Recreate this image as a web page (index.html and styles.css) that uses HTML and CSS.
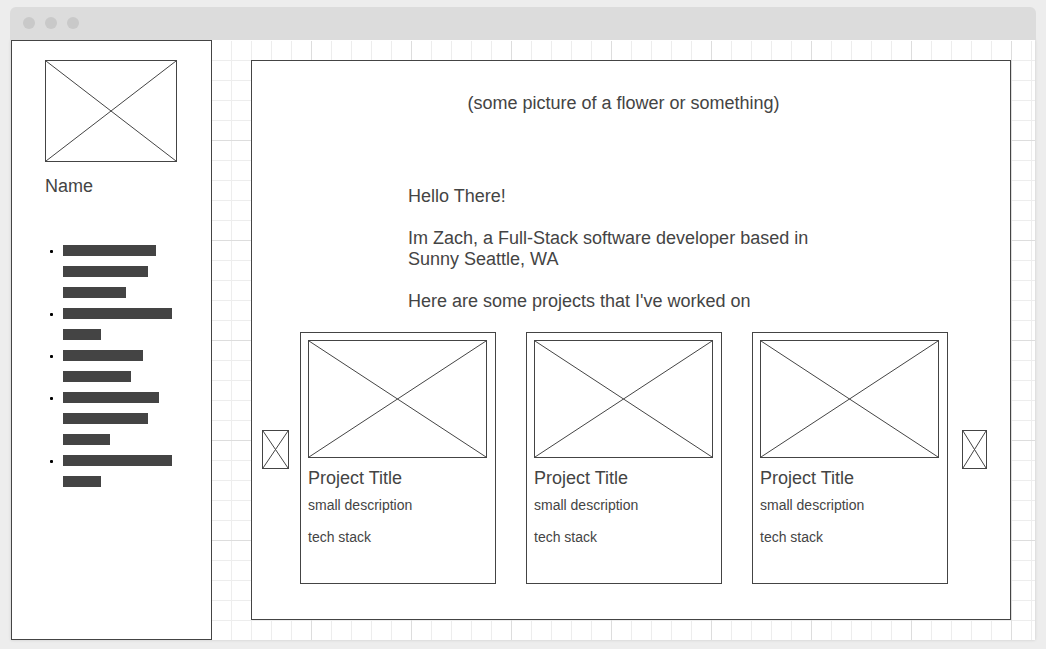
FILE: index.html
```html
<!DOCTYPE html>
<html lang="en">
<head>
<meta charset="utf-8">
<meta name="viewport" content="width=device-width, initial-scale=1">
<title>Portfolio wireframe</title>
<link rel="stylesheet" href="styles.css">
</head>
<body>
<div class="window">
  <header class="titlebar">
    <span class="dot"></span><span class="dot"></span><span class="dot"></span>
  </header>
  <div class="canvas">
    <aside class="sidebar">
      <svg class="placeholder portrait" viewBox="0 0 100 100" preserveAspectRatio="none" aria-hidden="true"><path d="M0 0L100 100M100 0L0 100"/></svg>
      <p class="name">Name</p>
      <ul class="links">
        <li><span class="bar" style="width:93px"></span><span class="bar" style="width:85px"></span><span class="bar" style="width:63px"></span></li>
        <li><span class="bar" style="width:109px"></span><span class="bar" style="width:38px"></span></li>
        <li><span class="bar" style="width:80px"></span><span class="bar" style="width:68px"></span></li>
        <li><span class="bar" style="width:96px"></span><span class="bar" style="width:85px"></span><span class="bar" style="width:47px"></span></li>
        <li><span class="bar" style="width:109px"></span><span class="bar" style="width:38px"></span></li>
      </ul>
    </aside>
    <main class="page">
      <p class="banner">(some picture of a flower or something)</p>
      <div class="intro">
        <p>Hello There!</p>
        <p>Im Zach, a Full-Stack software developer based in<br>Sunny Seattle, WA</p>
        <p>Here are some projects that I've worked on</p>
      </div>
      <section class="carousel" aria-label="Projects">
        <button class="arrow previous" type="button" aria-label="Previous">
          <svg class="placeholder" viewBox="0 0 100 100" preserveAspectRatio="none" aria-hidden="true"><path d="M0 0L100 100M100 0L0 100"/></svg>
        </button>
        <div class="cards">
          <article class="card">
            <svg class="placeholder thumb" viewBox="0 0 100 100" preserveAspectRatio="none" aria-hidden="true"><path d="M0 0L100 100M100 0L0 100"/></svg>
            <h2>Project Title</h2>
            <p>small description</p>
            <p>tech stack</p>
          </article>
          <article class="card">
            <svg class="placeholder thumb" viewBox="0 0 100 100" preserveAspectRatio="none" aria-hidden="true"><path d="M0 0L100 100M100 0L0 100"/></svg>
            <h2>Project Title</h2>
            <p>small description</p>
            <p>tech stack</p>
          </article>
          <article class="card">
            <svg class="placeholder thumb" viewBox="0 0 100 100" preserveAspectRatio="none" aria-hidden="true"><path d="M0 0L100 100M100 0L0 100"/></svg>
            <h2>Project Title</h2>
            <p>small description</p>
            <p>tech stack</p>
          </article>
        </div>
        <button class="arrow next" type="button" aria-label="Next">
          <svg class="placeholder" viewBox="0 0 100 100" preserveAspectRatio="none" aria-hidden="true"><path d="M0 0L100 100M100 0L0 100"/></svg>
        </button>
      </section>
    </main>
  </div>
</div>
</body>
</html>
```
FILE: styles.css
```css
* {
  box-sizing: border-box;
}

body {
  margin: 0;
  padding: 7px 10px 8px;
  background: #ededed;
  color: #444;
  font: 18px/21px "Liberation Sans", Arial, sans-serif;
}

p,
h2,
ul {
  margin: 0;
  padding: 0;
}

/* Stacked above the canvas so that the canvas shadow stays hidden behind it. */
.titlebar {
  position: relative;
  display: flex;
  align-items: center;
  gap: 10px;
  height: 33px;
  padding: 0 13px 1px;
  border-radius: 6px 6px 0 0;
  background: #dcdcdc;
}

.dot {
  width: 12px;
  height: 12px;
  border-radius: 50%;
  background: #c9c9c9;
}

/* Grid paper: a line every 20px, a darker one every 100px. */
.canvas {
  display: flex;
  align-items: stretch;
  min-height: calc(100vh - 49px);
  margin: 0 1px;
  background-color: #fff;
  background-image:
    linear-gradient(#fff 1px, transparent 1px),
    linear-gradient(90deg, #ddd 1px, transparent 1px),
    linear-gradient(#ddd 1px, transparent 1px),
    linear-gradient(90deg, #ededed 1px, transparent 1px),
    linear-gradient(#ededed 1px, transparent 1px);
  background-size: 100% 100%, 100px 100px, 100px 100px, 20px 20px, 20px 20px;
  box-shadow: 0 0 3px rgba(0, 0, 0, 0.15);
}

.sidebar {
  flex: 0 0 201px;
  padding: 19px 34px 19px 33px;
  border: 1px solid #444;
  background: #fff;
}

.placeholder {
  display: block;
  width: 100%;
  height: 100%;
  border: 1px solid #444;
  background: #fff;
}

.placeholder path {
  fill: none;
  stroke: #444;
  stroke-width: 1px;
  vector-effect: non-scaling-stroke;
}

.portrait {
  height: 102px;
}

.name {
  margin-top: 14px;
}

.links {
  margin-top: 43px;
  list-style: none;
}

.links li {
  display: flex;
  flex-direction: column;
  gap: 10px;
  position: relative;
  padding: 5px 0 5px 18px;
}

.links li::before {
  content: "";
  position: absolute;
  left: 5px;
  top: 10px;
  width: 3px;
  height: 3px;
  border-radius: 1px;
  background: #000;
}

.bar {
  height: 11px;
  background: #444;
}

.page {
  flex: 1;
  margin: 20px 24px 20px 39px;
  border: 1px solid #444;
  background: #fff;
}

.banner {
  padding: 32px 15px 0 0;
  text-align: center;
}

.intro {
  display: grid;
  gap: 21px;
  width: 446px;
  margin: 72px auto 0;
}

.carousel {
  display: flex;
  align-items: flex-start;
  padding: 20px 23px 35px 10px;
}

.arrow {
  flex: none;
  height: 39px;
  margin-top: 98px;
  padding: 0;
  border: 0;
  background: none;
  cursor: pointer;
}

.previous {
  width: 27px;
  margin-right: 11px;
}

.next {
  width: 25px;
  margin-left: 14px;
}

.cards {
  display: flex;
  flex: 1;
  gap: 30px;
}

.card {
  flex: 1;
  min-height: 252px;
  padding: 7px 8px 7px 7px;
  border: 1px solid #444;
}

.thumb {
  height: 118px;
}

.card h2 {
  margin-top: 10px;
  font-size: 18px;
  font-weight: 400;
}

.card p {
  margin-top: 8px;
  font-size: 14px;
  line-height: 16px;
}

.card p + p {
  margin-top: 16px;
}
```
